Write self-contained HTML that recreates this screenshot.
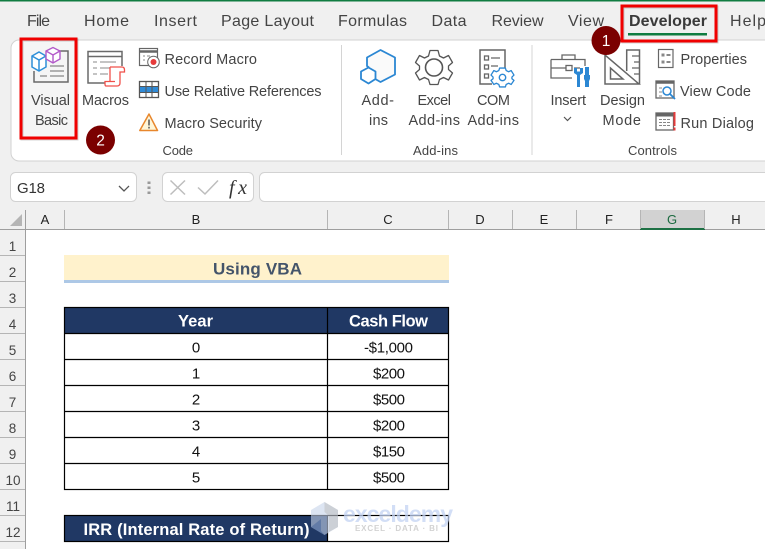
<!DOCTYPE html>
<html><head><meta charset="utf-8"><style>
html,body{margin:0;padding:0;width:765px;height:549px;overflow:hidden;background:#fff}
svg{display:block}
text{font-family:"Liberation Sans",sans-serif;fill:#3a3a3a}
.t{font-size:16px;fill:#444}
.r{font-size:14.5px;fill:#444}
.g{font-size:13px;fill:#444}
.h{font-size:13px;fill:#222;text-anchor:middle}
.n{font-size:13.5px;fill:#444;text-anchor:middle}
.d{font-size:15px;fill:#111}
.w{font-size:16.5px;fill:#fff;font-weight:bold}
</style></head><body>
<svg width="765" height="549" viewBox="0 0 765 549" xmlns="http://www.w3.org/2000/svg">
<rect width="765" height="549" fill="#fff"/>
<rect width="765" height="230" fill="#f0f0f0"/>
<rect width="765" height="1.5" fill="#107c41"/>
<!-- Tabs -->
<text class="t" x="27" y="26" textLength="23" lengthAdjust="spacing">File</text>
<text class="t" x="84" y="26" textLength="45" lengthAdjust="spacing">Home</text>
<text class="t" x="154" y="26" textLength="43" lengthAdjust="spacing">Insert</text>
<text class="t" x="221" y="26" textLength="93" lengthAdjust="spacing">Page Layout</text>
<text class="t" x="338" y="26" textLength="69" lengthAdjust="spacing">Formulas</text>
<text class="t" x="431.5" y="26" textLength="35" lengthAdjust="spacing">Data</text>
<text class="t" x="491.5" y="26" textLength="52" lengthAdjust="spacing">Review</text>
<text class="t" x="568" y="26" textLength="36" lengthAdjust="spacing">View</text>
<text class="t" x="629" y="26" textLength="78" lengthAdjust="spacing" style="font-weight:bold;fill:#3a3a3a">Developer</text>
<text class="t" x="730" y="26" textLength="36" lengthAdjust="spacing">Help</text>
<rect x="628" y="33" width="79" height="2.5" fill="#107c41"/>
<!-- Ribbon -->
<rect x="11" y="40" width="780" height="121" rx="8" fill="#fff" stroke="#d2d2d2" stroke-width="1"/>
<rect x="341" y="45" width="1" height="110" fill="#d4d4d4"/>
<rect x="531.5" y="45" width="1" height="110" fill="#d4d4d4"/>
<!-- VB highlight -->
<rect x="22" y="40" width="55" height="99" fill="#777" opacity=".35"/>
<rect x="21" y="39" width="55" height="99" fill="#f5f5f5"/>
<!-- VB icon -->
<g fill="none" stroke="#6a6a6a" stroke-width="1.2">
<path d="M58 51H68V82H34V71" stroke-width="1.5"/>
<path d="M50 66H64M50 71H64M40 76H47M50 76H64" stroke="#888"/>
</g>
<g fill="#fff" stroke="#2e8fd8" stroke-width="1.5"><path d="M32 56L39 52L46 56V67L39 71L32 67Z"/><path d="M32 56L39 60L46 56M39 60V71"/></g>
<g fill="#fff" stroke="#b259c9" stroke-width="1.4"><path d="M46 51L53 47.500L60 51V59L53 63L46 59Z"/><path d="M46 51L53 55L60 51M53 55V63"/></g>
<!-- Macros icon -->
<g fill="none" stroke="#6a6a6a"><path d="M105 83H88V51.500H122V66" stroke-width="1.5"/><path d="M88 56.500H122" stroke-width="1.500"/><path d="M93 62H97M100 62H116M93 68H97M100 68H112M93 74H97M100 74H108" stroke="#888" stroke-width="1"/></g>
<g fill="#fff" stroke="#f0504a" stroke-width="1.3"><path d="M110 67H122Q124.500 67 124.500 70V72H120V83Q120 86 117 86H106Q105 86 105 84V81.500H115"/><path d="M110 67V81.500"/></g>
<!-- Small code icons -->
<g fill="none" stroke="#666"><rect x="139.500" y="48.500" width="18" height="17" stroke-width="1.200"/><path d="M139.500 51.500H157.500" stroke-width="2.500"/><path d="M143 56H145M147 56H150M143 60H145" stroke="#888"/></g>
<circle cx="153.500" cy="62" r="5.800" fill="#fff" stroke="#666"/><circle cx="153.500" cy="62" r="3" fill="#e63b3b"/>
<rect x="139.500" y="81.500" width="19" height="16" fill="#fff" stroke="#555" stroke-width="1.300"/>
<rect x="140" y="86.500" width="18" height="6" fill="#2f8ad6"/>
<path d="M146 81.500V97.500M152 81.500V97.500M139.500 86.500H158.500M139.500 92.500H158.500" stroke="#555" stroke-width="1" fill="none"/>
<path d="M149 114L157.500 130.500H139.800Z" fill="#fff6d8" stroke="#e8872d" stroke-width="1.500" stroke-linejoin="round"/>
<path d="M149 119.500V125.500M149 126.800V128.500" stroke="#555" stroke-width="1.500"/>
<text class="r" x="164.500" y="64" textLength="92.500" lengthAdjust="spacing">Record Macro</text>
<text class="r" x="164.500" y="96" textLength="157" lengthAdjust="spacing">Use Relative References</text>
<text class="r" x="164.500" y="128" textLength="97.500" lengthAdjust="spacing">Macro Security</text>
<text class="r" x="31" y="105" textLength="39" lengthAdjust="spacing">Visual</text>
<text class="r" x="35" y="125" textLength="33" lengthAdjust="spacing">Basic</text>
<text class="r" x="82" y="105" textLength="47" lengthAdjust="spacing">Macros</text>
<text class="g" x="162.500" y="155" textLength="30.500" lengthAdjust="spacing">Code</text>
<!-- Add-ins icons -->
<path d="M369 67.500L367 66V57.500L380.500 50L395 57.500V74.500L380.500 82L373.500 78" fill="#fafafa" stroke="#2b87d3" stroke-width="1.800" stroke-linejoin="round"/>
<path d="M361 71.500L368.500 67.500L375.500 71.500V79L368.500 83.500L361 79Z" fill="#fff" stroke="#2b87d3" stroke-width="1.800" stroke-linejoin="round"/>
<g fill="none" stroke="#555" stroke-width="1.300" stroke-linejoin="round">
<path d="M430 50.500H438L439.500 56L443.500 58L448.500 55.500L452.500 62.500L448.500 66V69.500L452.500 73L448.500 80L443.500 77.500L439.500 79.500L438 84.500H430L428.500 79.500L424.500 77.500L419.500 80L415.500 73L419.500 69.500V66L415.500 62.500L419.500 55.500L424.500 58L428.500 56Z"/>
<circle cx="434" cy="67.500" r="8.500" stroke-width="1.600"/></g>
<g fill="none" stroke="#666" stroke-width="1.300"><path d="M492 84H480V50H505V68" stroke-width="1.500"/><rect x="484.500" y="56" width="4" height="4"/><rect x="484.500" y="65" width="4" height="4"/><rect x="484.500" y="74" width="4" height="4"/><path d="M491 58H500M491 66H498"/></g>
<path d="M499 69H506L507 72L510 73.500L513 72L516.500 77.500L514 80V82L516.500 84L513 89L510 87.500L507 89L506 92H499L498 89L495 87.500L492 89L488.500 84L491 82V80L488.500 77.500L492 72L495 73.500L498 72Z" transform="translate(502.500,77.500) scale(.82) translate(-502.500,-80.500)" fill="#fff" stroke="#2b87d3" stroke-width="1.600" stroke-linejoin="round"/>
<circle cx="502.500" cy="77.500" r="3.200" fill="none" stroke="#2b87d3" stroke-width="1.400"/>
<text class="r" x="361.500" y="105" textLength="32.500" lengthAdjust="spacing">Add-</text>
<text class="r" x="369" y="125" textLength="19" lengthAdjust="spacing">ins</text>
<text class="r" x="417.500" y="105" textLength="33.500" lengthAdjust="spacing">Excel</text>
<text class="r" x="408.500" y="125" textLength="51.500" lengthAdjust="spacing">Add-ins</text>
<text class="r" x="477" y="105" textLength="33" lengthAdjust="spacing">COM</text>
<text class="r" x="467.500" y="125" textLength="51.500" lengthAdjust="spacing">Add-ins</text>
<text class="g" x="413" y="155" textLength="45" lengthAdjust="spacing">Add-ins</text>
<!-- Controls icons -->
<g fill="none" stroke="#666" stroke-width="1.300"><path d="M551 59.500H585V66M551 59.500V78H572M551 68H566M574 68H580M562 59.500V55H575V59.500"/><rect x="566" y="65.500" width="6" height="5"/></g>
<g fill="#2b87d3"><path d="M574 68H577V71.500H580V68H583V73L580 75V87H577V75L574 73Z"/><path d="M585 67H589V75H590V79L589 81V87H585V81L584 79V75H585Z"/></g>
<g fill="none" stroke="#666" stroke-width="1.500" stroke-linejoin="miter"><path d="M605 55V84H639Z"/><path d="M610.500 68V79H623Z"/><path d="M626.700 71V50H639.500V84"/><path d="M632 56H639M634 62H639M632 68H639M634 74H639" stroke-width="1.200"/></g>
<g fill="none" stroke="#666" stroke-width="1.200"><rect x="658.500" y="49.500" width="14.500" height="18"/></g>
<path d="M661.500 53.500H664.500V56.500H661.500ZM661.500 60.500H664.500V63.500H661.500ZM666.500 54H670.500V56H666.500ZM666.500 61H670.500V63H666.500Z" fill="#888"/>
<rect x="656" y="81" width="18" height="17" fill="#fff" stroke="#666" stroke-width="1.300"/><path d="M656 82.500H674" stroke="#666" stroke-width="2.500"/>
<path d="M659 88H662M659 92H662M659 96H662" stroke="#888"/>
<circle cx="667" cy="91" r="4" fill="#fff" stroke="#2b87d3" stroke-width="1.500"/><path d="M670 94L675 99" stroke="#2b87d3" stroke-width="1.800"/>
<rect x="656" y="113" width="17.500" height="17" fill="#fff" stroke="#666" stroke-width="1.300"/><path d="M656 115H673.500" stroke="#666" stroke-width="3"/>
<path d="M659 119.500H671M659 122.500H671M659 125.500H671" stroke="#888" stroke-dasharray="3 1"/>
<path d="M674.500 112V126M674.500 127.500V130.500" stroke="#e63b3b" stroke-width="2"/>
<text class="r" x="550.500" y="105" textLength="35.500" lengthAdjust="spacing">Insert</text>
<path d="M564 117L567.500 120.500L571 117" fill="none" stroke="#555" stroke-width="1.200"/>
<text class="r" x="600" y="105" textLength="45" lengthAdjust="spacing">Design</text>
<text class="r" x="602.500" y="125" textLength="38.500" lengthAdjust="spacing">Mode</text>
<text class="r" x="680.500" y="64" textLength="66.500" lengthAdjust="spacing">Properties</text>
<text class="r" x="680" y="96" textLength="71" lengthAdjust="spacing">View Code</text>
<text class="r" x="680.500" y="128" textLength="73.500" lengthAdjust="spacing">Run Dialog</text>
<text class="g" x="628" y="155" textLength="49" lengthAdjust="spacing">Controls</text>
<!-- Red boxes -->
<rect x="22" y="40" width="55" height="99" fill="none" stroke="#555" stroke-width="3" opacity=".25"/>
<rect x="21" y="39" width="55" height="99" fill="none" stroke="#f00000" stroke-width="3"/>
<rect x="623" y="7" width="94" height="35" fill="none" stroke="#555" stroke-width="3" opacity=".25"/>
<rect x="622" y="6" width="94" height="35" fill="none" stroke="#f00000" stroke-width="3"/>
<!-- Badges -->
<circle cx="606" cy="40.500" r="14.500" fill="#7b0000"/>
<text x="606" y="46" style="font-size:15.500px;fill:#fff;text-anchor:middle">1</text>
<circle cx="100.500" cy="140" r="14.500" fill="#7b0000"/>
<text x="100.500" y="145.500" style="font-size:15.500px;fill:#fff;text-anchor:middle">2</text>
<!-- Formula bar -->
<rect x="10.500" y="172.500" width="126" height="29" rx="5" fill="#fff" stroke="#d2d2d2"/>
<text x="17" y="193" textLength="28" lengthAdjust="spacing" style="font-size:15px;fill:#333">G18</text>
<path d="M119 186L124 191L129 186" fill="none" stroke="#555" stroke-width="1.300"/>
<path d="M149 181.500V184M149 186.500V189M149 191.500V194" stroke="#999" stroke-width="3"/>
<rect x="162.500" y="172.500" width="91" height="29" rx="5" fill="#fff" stroke="#d2d2d2"/>
<path d="M170.500 180.500L185 194.500M185 180.500L170.500 194.500" stroke="#bdbdbd" stroke-width="1.500" fill="none"/>
<path d="M198 187.500L205 194L218 180.500" stroke="#bdbdbd" stroke-width="1.500" fill="none"/>
<text x="229" y="194" style="font-family:'Liberation Serif',serif;font-style:italic;font-size:20px;fill:#333" textLength="18" lengthAdjust="spacing">fx</text>
<rect x="259.500" y="172.500" width="520" height="29" rx="5" fill="#fff" stroke="#d2d2d2"/>
<!-- Column headers -->
<rect x="640" y="210" width="64" height="19" fill="#d2d2d2"/>
<rect x="0" y="229" width="765" height="1" fill="#9e9e9e"/>
<rect x="640" y="228" width="65" height="2" fill="#1d7044"/>
<g fill="#b5b5b5"><rect x="25" y="210" width="1" height="19"/><rect x="64" y="210" width="1" height="19"/><rect x="327" y="210" width="1" height="19"/><rect x="448" y="210" width="1" height="19"/><rect x="512" y="210" width="1" height="19"/><rect x="576" y="210" width="1" height="19"/><rect x="640" y="210" width="1" height="19"/><rect x="704" y="210" width="1" height="19"/></g>
<path d="M22 214V226H10Z" fill="#b5b5b5"/>
<text class="h" x="45" y="224">A</text><text class="h" x="196" y="224">B</text><text class="h" x="388" y="224">C</text><text class="h" x="480" y="224">D</text><text class="h" x="544" y="224">E</text><text class="h" x="609" y="224">F</text><text class="h" x="672" y="224" style="fill:#1d6b41">G</text><text class="h" x="736" y="224">H</text>
<!-- Row headers -->
<rect x="0" y="230" width="25" height="319" fill="#f0f0f0"/>
<rect x="25" y="210" width="1" height="339" fill="#9e9e9e"/>
<g fill="#b5b5b5"><rect y="255" width="25" height="1"/><rect y="281" width="25" height="1"/><rect y="307" width="25" height="1"/><rect y="333" width="25" height="1"/><rect y="359" width="25" height="1"/><rect y="385" width="25" height="1"/><rect y="411" width="25" height="1"/><rect y="437" width="25" height="1"/><rect y="463" width="25" height="1"/><rect y="489" width="25" height="1"/><rect y="515" width="25" height="1"/><rect y="541" width="25" height="1"/></g>
<text class="n" x="12.500" y="251">1</text><text class="n" x="12.500" y="277">2</text><text class="n" x="12.500" y="303">3</text><text class="n" x="12.500" y="329">4</text><text class="n" x="12.500" y="355">5</text><text class="n" x="12.500" y="381">6</text><text class="n" x="12.500" y="407">7</text><text class="n" x="12.500" y="433">8</text><text class="n" x="12.500" y="459">9</text><text class="n" x="13" y="485">10</text><text class="n" x="13" y="511">11</text><text class="n" x="13" y="537">12</text>
<!-- Title -->
<rect x="64" y="255" width="385" height="25" fill="#fff2cc"/>
<rect x="64" y="280" width="385" height="3" fill="#adc8e6"/>
<text x="213" y="274.500" textLength="89" lengthAdjust="spacing" style="font-size:17px;font-weight:bold;fill:#44546a">Using VBA</text>
<!-- Table -->
<rect x="64.500" y="307.500" width="384" height="26" fill="#203864"/>
<g fill="none" stroke="#000" stroke-width="1.200">
<rect x="64.500" y="307.500" width="384" height="182"/>
<path d="M327.500 307.500V489.500M64.500 333.500H448.500M64.500 359.500H448.500M64.500 385.500H448.500M64.500 411.500H448.500M64.500 437.500H448.500M64.500 463.500H448.500"/>
</g>
<text class="w" x="178" y="326.500" textLength="35" lengthAdjust="spacing">Year</text>
<text class="w" x="349" y="326.500" textLength="79" lengthAdjust="spacing">Cash Flow</text>
<g text-anchor="middle"><text class="d" x="196" y="352.500">0</text><text class="d" x="196" y="378.500">1</text><text class="d" x="196" y="404.500">2</text><text class="d" x="196" y="430.500">3</text><text class="d" x="196" y="456.500">4</text><text class="d" x="196" y="482.500">5</text></g>
<text class="d" x="364" y="352.500" textLength="49" lengthAdjust="spacing">-$1,000</text>
<text class="d" x="373" y="378.500" textLength="32" lengthAdjust="spacing">$200</text>
<text class="d" x="373" y="404.500" textLength="32" lengthAdjust="spacing">$500</text>
<text class="d" x="373" y="430.500" textLength="32" lengthAdjust="spacing">$200</text>
<text class="d" x="373" y="456.500" textLength="32" lengthAdjust="spacing">$150</text>
<text class="d" x="373" y="482.500" textLength="32" lengthAdjust="spacing">$500</text>
<!-- IRR -->
<rect x="64.500" y="515.500" width="263" height="26" fill="#203864"/>
<rect x="64.500" y="515.500" width="384" height="26" fill="none" stroke="#000" stroke-width="1.200"/>
<path d="M327.500 515.500V541.500" stroke="#000" stroke-width="1.200"/>
<text class="w" x="83.500" y="535" textLength="226" lengthAdjust="spacing">IRR (Internal Rate of Return)</text>
<!-- Watermark -->
<g opacity=".75">
<path d="M324.500 502L338 510V527L324.500 535L311 527V510Z" fill="#c5d3ea" opacity=".8"/>
<path d="M324.500 502L338 510V527L329 532V516L324.500 512Z" fill="#a9a9a9" opacity=".55"/>
<path d="M311 527L321 519V531L324.500 535Z" fill="#5c7bb0" opacity=".6"/>
<text x="343" y="522" textLength="110" lengthAdjust="spacing" style="font-size:23px;font-weight:bold;fill:#c3d3f3">exceldemy</text>
<text x="355" y="531" textLength="83" lengthAdjust="spacing" style="font-size:8px;font-weight:bold;fill:#c4c4c4">EXCEL · DATA · BI</text>
</g>
</svg>
</body></html>
